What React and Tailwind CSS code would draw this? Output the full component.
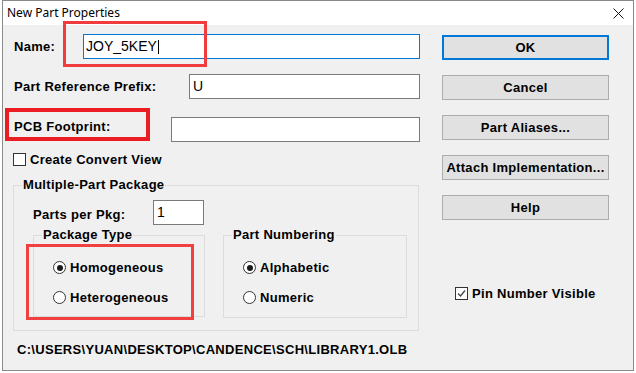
import React from 'react';

const FONT = "font-['Liberation_Sans',Arial,sans-serif]";

function Radio({ checked, label }) {
  return (
    <div className="flex items-center h-[13px]">
      <span className="w-[13px] h-[13px] rounded-full border border-[#333] bg-white flex items-center justify-center">
        {checked && <span className="w-[6px] h-[6px] rounded-full bg-[#1a1a1a]" />}
      </span>
      <span className="ml-[4px] font-bold text-[13px] tracking-[0.3px] text-black">{label}</span>
    </div>
  );
}

function Check({ checked, label }) {
  return (
    <div className="flex items-center h-[13px]">
      <span className="w-[13px] h-[13px] border border-[#333] bg-white flex items-center justify-center">
        {checked && (
          <svg width="11" height="11" viewBox="0 0 11 11">
            <path d="M2 5.5 L4.5 8 L9 2.5" fill="none" stroke="#444" strokeWidth="1.3" />
          </svg>
        )}
      </span>
      <span className="ml-[4px] font-bold text-[13px] tracking-[0.3px] text-black">{label}</span>
    </div>
  );
}

function Btn({ children, primary }) {
  return (
    <div
      className={
        'h-[25px] bg-[#e1e1e1] flex items-center justify-center font-bold text-[13px] tracking-[0.3px] text-black ' +
        (primary ? 'border-2 border-[#0078d7]' : 'border border-[#adadad]')
      }
    >
      {children}
    </div>
  );
}

function Group({ label, className, children }) {
  return (
    <div className={'relative border border-[#dcdcdc] ' + className}>
      <span className="absolute -top-[9px] left-[8px] px-[1px] bg-[#f0f0f0] font-bold text-[13px] tracking-[0.3px] text-black leading-[15px]">
        {label}
      </span>
      {children}
    </div>
  );
}

export default function App() {
  return (
    <div className={'w-[636px] h-[373px] bg-white ' + FONT}>
      <div className="relative ml-[2px] w-[632px] h-[371px] border border-[#8a8a8a] flex flex-col">
        {/* barre de titre */}
        <div className="h-[24px] bg-white flex items-center justify-between pl-[4px] pr-[9px]">
          <span className="text-[12px] text-black font-['Noto_Sans',sans-serif]">New Part Properties</span>
          <svg width="11" height="11" viewBox="0 0 11 11">
            <path d="M0.5 0.5 L10.5 10.5 M10.5 0.5 L0.5 10.5" stroke="#111" strokeWidth="1" />
          </svg>
        </div>

        <div className="flex-1 bg-[#f0f0f0] flex pl-[10px]">
          {/* colonne gauche */}
          <div className="w-[407px] flex flex-col font-bold text-[13px] tracking-[0.3px] text-black">
            <div className="mt-[9px] h-[25px] flex items-center">
              <span className="w-[70px] pl-[1px]">Name:</span>
              <div className="w-[337px] h-[25px] border border-[#0078d7] bg-white flex items-center pl-[2px] font-normal text-[14px] tracking-normal">
                JOY_5KEY
                <span className="ml-[1px] w-[1px] h-[14px] bg-black" />
              </div>
            </div>
            <div className="mt-[15px] h-[25px] flex items-center">
              <span className="w-[176px] pl-[1px]">Part Reference Prefix:</span>
              <div className="w-[231px] h-[25px] border border-[#7a7a7a] bg-white flex items-center pl-[3px] font-normal text-[14px] tracking-normal">
                U
              </div>
            </div>
            <div className="mt-[18px] h-[25px] flex items-center">
              <span className="w-[158px] pl-[1px] -mt-[6px]">PCB Footprint:</span>
              <div className="w-[249px] h-[25px] border border-[#7a7a7a] bg-white" />
            </div>
            <div className="mt-[11px]">
              <Check label="Create Convert View" />
            </div>

            <Group label="Multiple-Part Package" className="mt-[19px] w-[406px] h-[146px] pt-[14px] pl-[19px]">
              <div className="h-[25px] flex items-center">
                <span className="w-[120px] mt-[4px]">Parts per Pkg:</span>
                <div className="w-[51px] h-[25px] border border-[#7a7a7a] bg-white flex items-center pl-[3px] font-normal text-[14px] tracking-normal">
                  1
                </div>
              </div>
              <div className="mt-[10px] flex gap-[18px]">
                <Group label="Package Type" className="w-[172px] h-[82px] pt-[25px] pl-[19px]">
                  <div className="flex flex-col gap-[17px]">
                    <Radio checked label="Homogeneous" />
                    <Radio label="Heterogeneous" />
                  </div>
                </Group>
                <Group label="Part Numbering" className="w-[184px] h-[83px] pt-[25px] pl-[19px]">
                  <div className="flex flex-col gap-[17px]">
                    <Radio checked label="Alphabetic" />
                    <Radio label="Numeric" />
                  </div>
                </Group>
              </div>
            </Group>

            <div className="mt-[9px] pl-[4px]">C:\USERS\YUAN\DESKTOP\CANDENCE\SCH\LIBRARY1.OLB</div>
          </div>

          {/* boutons */}
          <div className="ml-[22px] w-[167px] flex flex-col">
            <div className="mt-[10px] flex flex-col gap-[15px]">
              <Btn primary>OK</Btn>
              <Btn>Cancel</Btn>
              <Btn>Part Aliases...</Btn>
              <Btn>Attach Implementation...</Btn>
              <Btn>Help</Btn>
            </div>
            <div className="mt-[67px] ml-[13px]">
              <Check checked label="Pin Number Visible" />
            </div>
          </div>
        </div>

        {/* annotations rouges */}
        <div className="absolute left-[60px] top-[20px] w-[144px] h-[46px] border-[3px] border-[#f03c3c]" />
        <div className="absolute left-[2px] top-[107px] w-[145px] h-[33px] border-4 border-[#ec1c24]" />
        <div className="absolute left-[23px] top-[243px] w-[168px] h-[76px] border-[3px] border-[#f04040]" />
      </div>
    </div>
  );
}
